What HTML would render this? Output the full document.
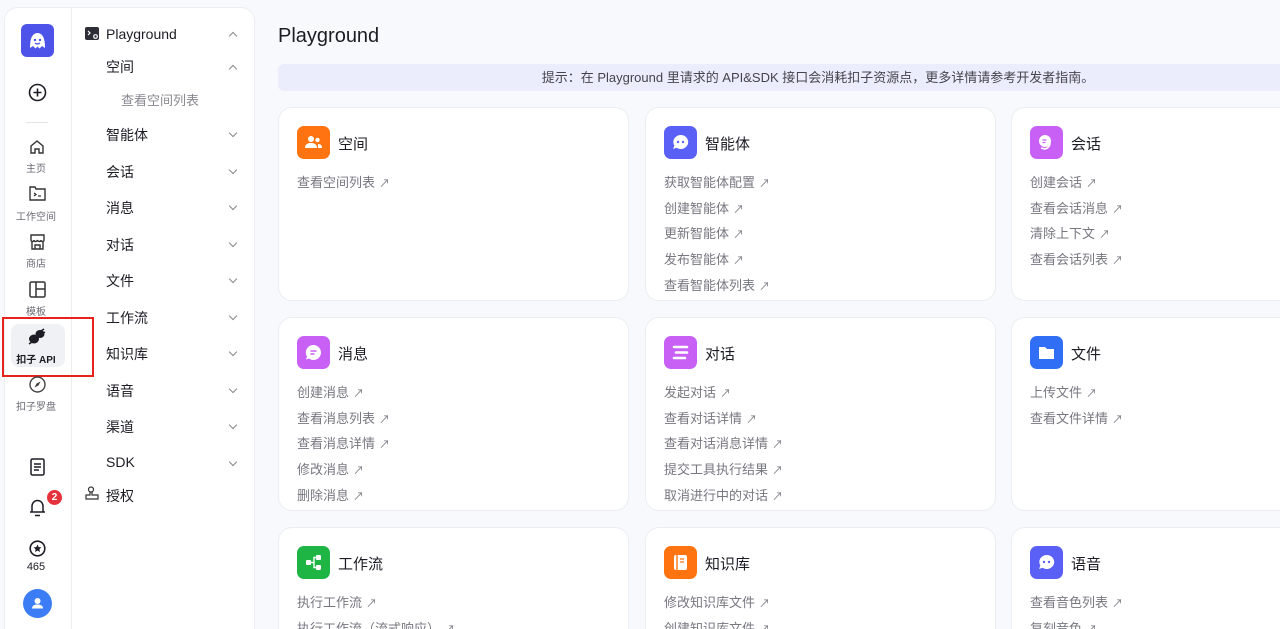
<!DOCTYPE html>
<html><head><meta charset="utf-8"><style>
*{box-sizing:border-box;margin:0;padding:0}
html,body{width:1280px;height:629px;overflow:hidden}
body{background:#f8f9fc;font-family:"Liberation Sans","Noto Sans CJK SC",sans-serif;color:#1d1c24;position:relative}
.side{position:absolute;left:4px;top:7px;width:251px;height:700px;background:#fff;border:1px solid #eceef2;border-radius:14px}
.col{position:absolute;left:71px;top:8px;width:1px;height:630px;background:#eceef2}
.ab{position:absolute}
.nav{position:absolute;left:0;width:72px;text-align:center;font-size:10px;color:#6b6b75}
.menu{position:absolute;left:106px;font-size:14px;color:#1d1c24}
.chev{position:absolute;left:230px;width:6px;height:6px;border-right:1.3px solid #888;border-bottom:1.3px solid #888;transform:rotate(45deg)}
.chev.up{transform:rotate(-135deg)}
.card{position:absolute;width:351px;height:194px;background:#fff;border:1px solid #ebedf2;border-radius:14px}
.ic{position:absolute;left:18px;top:18px;width:33px;height:33px;border-radius:7px}
.ic svg{position:absolute;left:0;top:0}
.ct{position:absolute;left:59px;top:25px;font-size:15px;color:#1d1c24}
.links{position:absolute;left:18px;top:63px;font-size:13px;color:#777780;line-height:23.7px}
.links span{margin-left:4px;font-size:11px}
</style></head><body>
<div class="side"></div>
<div class="col"></div>
<div class="ab" style="left:21px;top:24px;width:33px;height:33px;background:#4d53e8;border-radius:6px">
<svg width="33" height="33" viewBox="0 0 33 33"><path d="M9 24 Q9 9 16.5 9 Q24 9 24 24 L21 22 L18.5 24.5 L16.5 22.5 L14.5 24.5 L12 22 Z" fill="#fff"/><circle cx="14" cy="16" r="1.2" fill="#4d53e8"/><circle cx="19" cy="16" r="1.2" fill="#4d53e8"/><path d="M14 19 Q16.5 21 19 19" stroke="#4d53e8" stroke-width="1.2" fill="none"/></svg></div>
<svg class="ab" style="left:28px;top:83px" width="19" height="19" viewBox="0 0 19 19"><circle cx="9.5" cy="9.5" r="8" fill="none" stroke="#1d1c24" stroke-width="1.6"/><path d="M9.5 5.5v8M5.5 9.5h8" stroke="#1d1c24" stroke-width="1.6"/></svg>
<div class="ab" style="left:26px;top:122px;width:22px;height:1px;background:#e4e4e8"></div>
<svg class="ab" style="left:29px;top:139px" width="16" height="16" viewBox="0 0 16 16"><path d="M2 7L8 2l6 5v7H10v-4H6v4H2z" fill="none" stroke="#333" stroke-width="1.4"/></svg>
<div class="nav" style="top:160px">主页</div>
<svg class="ab" style="left:29px;top:186px" width="17" height="15" viewBox="0 0 17 15"><path d="M1 1h5l1 2h9v11H1z" fill="none" stroke="#333" stroke-width="1.4"/><path d="M5 7l2 1.5L5 10M9 10h3" stroke="#333" stroke-width="1.3" fill="none"/></svg>
<div class="nav" style="top:208px">工作空间</div>
<svg class="ab" style="left:29px;top:234px" width="17" height="16" viewBox="0 0 17 16"><path d="M2 1h13v5c0 2-3 2-3 0 0 2-3 2-3.5 0-.5 2-3.5 2-3.5 0 0 2-3 2-3 0zM3 8v7h11V8M6 15v-4h5v4" fill="none" stroke="#333" stroke-width="1.4"/></svg>
<div class="nav" style="top:255px">商店</div>
<svg class="ab" style="left:29px;top:281px" width="17" height="17" viewBox="0 0 17 17"><rect x="1" y="1" width="15" height="15" rx="1.5" fill="none" stroke="#333" stroke-width="1.5"/><path d="M7 1v15M7 8h9" stroke="#333" stroke-width="1.5"/></svg>
<div class="nav" style="top:303px">模板</div>
<div class="ab" style="left:11px;top:324px;width:54px;height:43px;background:#f0f1f4;border-radius:8px"></div>
<svg class="ab" style="left:28px;top:328px" width="18" height="17" viewBox="0 0 18 17"><ellipse cx="6" cy="11" rx="5" ry="4.5" fill="#1d1c24"/><ellipse cx="12" cy="6" rx="4.5" ry="4" fill="#1d1c24"/><path d="M13 3l3-2M15 5l2-1M1 16l3-2" stroke="#1d1c24" stroke-width="1.5"/></svg>
<div class="nav" style="top:351px;color:#1d1c24;font-weight:bold">扣子 API</div>
<div class="ab" style="left:2px;top:317px;width:92px;height:60px;border:2.5px solid #e8221d"></div>
<svg class="ab" style="left:29px;top:376px" width="17" height="17" viewBox="0 0 17 17"><circle cx="8.5" cy="8.5" r="7.5" fill="none" stroke="#444" stroke-width="1.4"/><path d="M11.5 5.5L9.5 9.5L5.5 11.5L7.5 7.5Z" fill="#444"/></svg>
<div class="nav" style="top:398px">扣子罗盘</div>
<svg class="ab" style="left:30px;top:458px" width="15" height="18" viewBox="0 0 15 18"><rect x="1" y="1" width="13" height="16" rx="1.5" fill="none" stroke="#1d1c24" stroke-width="1.5"/><path d="M4 6h7M4 9h7M4 12h5" stroke="#1d1c24" stroke-width="1.4"/></svg>
<svg class="ab" style="left:29px;top:498px" width="17" height="19" viewBox="0 0 17 19"><path d="M3 14V8a5.5 5.5 0 0 1 11 0v6M1 14h15M6 17.5h5" fill="none" stroke="#1d1c24" stroke-width="1.5"/></svg>
<div class="ab" style="left:47px;top:490px;width:15px;height:15px;border-radius:50%;background:#e5323c;color:#fff;font-size:10px;font-weight:bold;text-align:center;line-height:15px">2</div>
<svg class="ab" style="left:29px;top:540px" width="17" height="17" viewBox="0 0 17 17"><circle cx="8.5" cy="8.5" r="7.3" fill="none" stroke="#1d1c24" stroke-width="1.6"/><path d="M8.5 4.5l1.2 2.6 2.7.3-2 1.9.6 2.7-2.5-1.4-2.5 1.4.6-2.7-2-1.9 2.7-.3z" fill="#1d1c24"/></svg>
<div class="nav" style="top:561px;font-size:11px;color:#1d1c24">465</div>
<div class="ab" style="left:23px;top:589px;width:29px;height:29px;border-radius:50%;background:#3c7cf5"><svg width="29" height="29" viewBox="0 0 29 29"><circle cx="14.5" cy="12" r="3" fill="#fff"/><path d="M9 19.5c0-3 2.5-4 5.5-4s5.5 1 5.5 4z" fill="#fff"/></svg></div>

<svg class="ab" style="left:85px;top:27px" width="15" height="14" viewBox="0 0 15 14"><rect x="0" y="0" width="14" height="13" rx="2" fill="#2e2e38"/><path d="M3 4l2 2-2 2" stroke="#fff" stroke-width="1.2" fill="none"/><circle cx="10.5" cy="9.5" r="2.4" fill="#fff"/><circle cx="10.5" cy="9.5" r="1.2" fill="#2e2e38"/></svg>
<div class="menu" style="top:26px;left:106px;font-size:14px">Playground</div><div class="chev up" style="top:33px"></div>
<div class="menu" style="top:57px">空间</div><div class="chev up" style="top:66px"></div>
<div class="menu" style="top:90px;left:121px;font-size:13px;color:#888890">查看空间列表</div>
<div class="menu" style="top:125px">智能体</div><div class="chev" style="top:130px"></div>
<div class="menu" style="top:162px">会话</div><div class="chev" style="top:167px"></div>
<div class="menu" style="top:198px">消息</div><div class="chev" style="top:203px"></div>
<div class="menu" style="top:235px">对话</div><div class="chev" style="top:240px"></div>
<div class="menu" style="top:271px">文件</div><div class="chev" style="top:276px"></div>
<div class="menu" style="top:308px">工作流</div><div class="chev" style="top:313px"></div>
<div class="menu" style="top:344px">知识库</div><div class="chev" style="top:349px"></div>
<div class="menu" style="top:381px">语音</div><div class="chev" style="top:386px"></div>
<div class="menu" style="top:417px">渠道</div><div class="chev" style="top:422px"></div>
<div class="menu" style="top:454px">SDK</div><div class="chev" style="top:459px"></div>
<svg class="ab" style="left:85px;top:486px" width="15" height="15" viewBox="0 0 15 15"><circle cx="6" cy="3.5" r="2.5" fill="none" stroke="#333" stroke-width="1.2"/><path d="M5 6v3H1v4h12V9H7V6" fill="none" stroke="#333" stroke-width="1.2"/></svg>
<div class="menu" style="top:486px">授权</div>

<div class="ab" style="left:278px;top:25px;font-size:20px;color:#1d1c24">Playground</div>
<div class="ab" style="left:278px;top:64px;width:1080px;height:27px;background:#ebedfc;border-radius:6px;text-align:center;font-size:13px;line-height:27px;color:#44444c">提示：在 Playground 里请求的 API&amp;SDK 接口会消耗扣子资源点，更多详情请参考开发者指南。</div>

<div class="card" style="left:278px;top:107px"><div class="ic" style="background:#ff7410"><svg width="33" height="33" viewBox="0 0 33 33"><circle cx="14" cy="13" r="3" fill="#fff"/><path d="M8 22c0-4 3-5 6-5s6 1 6 5z" fill="#fff"/><circle cx="20.5" cy="14" r="2.2" fill="#fff"/><path d="M21 22h4c0-3-1.5-4-4-4z" fill="#fff"/></svg></div><div class="ct">空间</div><div class="links">查看空间列表<span>↗</span></div></div>
<div class="card" style="left:645px;top:107px"><div class="ic" style="background:#5a5ff6"><svg width="33" height="33" viewBox="0 0 33 33"><path d="M16.5 9a7.5 7 0 1 1-4 12.8L9 23l1.4-3.4A7.5 7 0 0 1 16.5 9z" fill="#fff"/><circle cx="14" cy="16" r="1.2" fill="#5a5ff6"/><circle cx="19" cy="16" r="1.2" fill="#5a5ff6"/></svg></div><div class="ct">智能体</div><div class="links">获取智能体配置<span>↗</span><br>创建智能体<span>↗</span><br>更新智能体<span>↗</span><br>发布智能体<span>↗</span><br>查看智能体列表<span>↗</span></div></div>
<div class="card" style="left:1011px;top:107px"><div class="ic" style="background:#c860f5"><svg width="33" height="33" viewBox="0 0 33 33"><circle cx="15" cy="15" r="6" fill="#fff"/><path d="M12.5 14h4M12.5 16.5h3" stroke="#c860f5" stroke-width="1.2"/><path d="M20 17a6 6 0 0 1-5 6l-4-1" stroke="#fff" stroke-width="1.6" fill="none"/></svg></div><div class="ct">会话</div><div class="links">创建会话<span>↗</span><br>查看会话消息<span>↗</span><br>清除上下文<span>↗</span><br>查看会话列表<span>↗</span></div></div>

<div class="card" style="left:278px;top:317px"><div class="ic" style="background:#c860f5"><svg width="33" height="33" viewBox="0 0 33 33"><path d="M16.5 9a7.5 7.5 0 1 1-4.5 13.5L9 23.5l1-3A7.5 7.5 0 0 1 16.5 9z" fill="#fff"/><path d="M13.5 15h6M13.5 18h4" stroke="#c860f5" stroke-width="1.4"/></svg></div><div class="ct">消息</div><div class="links">创建消息<span>↗</span><br>查看消息列表<span>↗</span><br>查看消息详情<span>↗</span><br>修改消息<span>↗</span><br>删除消息<span>↗</span></div></div>
<div class="card" style="left:645px;top:317px"><div class="ic" style="background:#c860f5"><svg width="33" height="33" viewBox="0 0 33 33"><path d="M10 11h13M12 16.5h11M10 22h11" stroke="#fff" stroke-width="2.6" stroke-linecap="round"/></svg></div><div class="ct">对话</div><div class="links">发起对话<span>↗</span><br>查看对话详情<span>↗</span><br>查看对话消息详情<span>↗</span><br>提交工具执行结果<span>↗</span><br>取消进行中的对话<span>↗</span></div></div>
<div class="card" style="left:1011px;top:317px"><div class="ic" style="background:#2f6ef5"><svg width="33" height="33" viewBox="0 0 33 33"><path d="M9 11h6l2 2h7v10H9z" fill="#fff"/></svg></div><div class="ct">文件</div><div class="links">上传文件<span>↗</span><br>查看文件详情<span>↗</span></div></div>

<div class="card" style="left:278px;top:527px"><div class="ic" style="background:#1fb545"><svg width="33" height="33" viewBox="0 0 33 33"><rect x="9" y="14" width="5" height="5" rx="1" fill="#fff"/><rect x="19" y="9" width="5" height="5" rx="1" fill="#fff"/><rect x="19" y="19" width="5" height="5" rx="1" fill="#fff"/><path d="M14 16.5h3v-5h2M17 16.5v5h2" stroke="#fff" stroke-width="1.4" fill="none"/></svg></div><div class="ct">工作流</div><div class="links">执行工作流<span>↗</span><br>执行工作流（流式响应）<span>↗</span></div></div>
<div class="card" style="left:645px;top:527px"><div class="ic" style="background:#ff7410"><svg width="33" height="33" viewBox="0 0 33 33"><rect x="10" y="9" width="13" height="15" rx="2" fill="#fff"/><path d="M13 9v15" stroke="#ff7410" stroke-width="1.4"/><path d="M16 13h4M16 16h4" stroke="#ff7410" stroke-width="1.3"/></svg></div><div class="ct">知识库</div><div class="links">修改知识库文件<span>↗</span><br>创建知识库文件<span>↗</span></div></div>
<div class="card" style="left:1011px;top:527px"><div class="ic" style="background:#5a5ff6"><svg width="33" height="33" viewBox="0 0 33 33"><path d="M16.5 9a7.5 7 0 1 1-4 12.8L9 23l1.4-3.4A7.5 7 0 0 1 16.5 9z" fill="#fff"/><circle cx="14" cy="16" r="1.2" fill="#5a5ff6"/><circle cx="19" cy="16" r="1.2" fill="#5a5ff6"/></svg></div><div class="ct">语音</div><div class="links">查看音色列表<span>↗</span><br>复刻音色<span>↗</span></div></div>
</body></html>
